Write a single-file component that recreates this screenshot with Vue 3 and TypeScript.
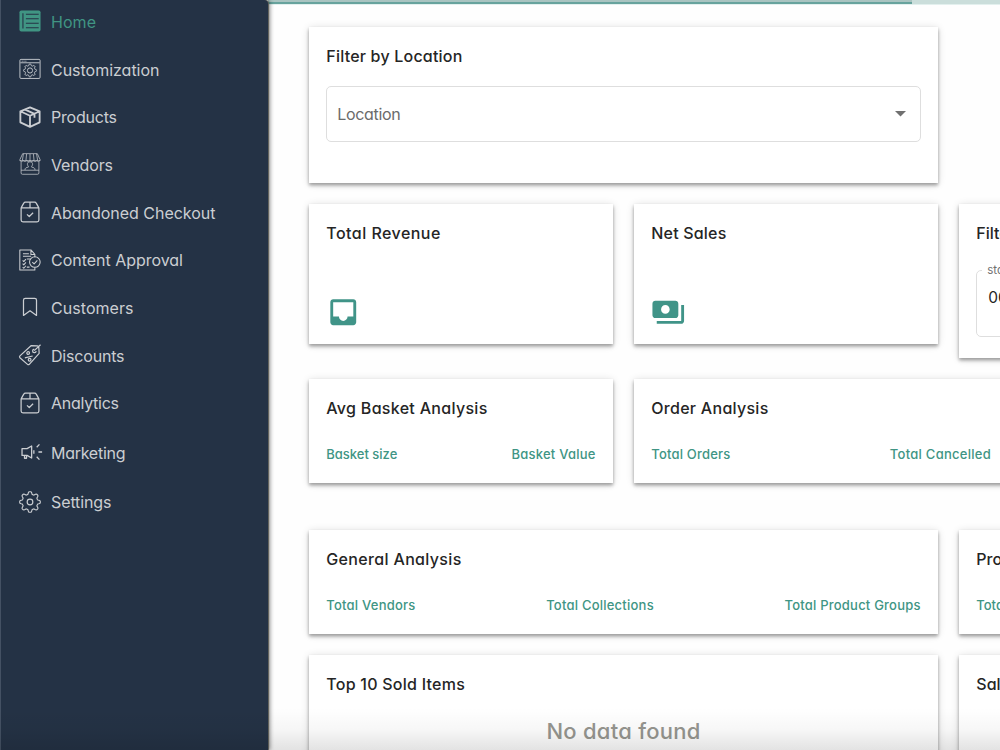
<script setup lang="ts">
interface MenuItem {
  label: string
  icon: string
  width: number
}

interface Metric {
  text: string
  width: number
}

const menu: MenuItem[] = [
  { label: 'Home', icon: 'home', width: 45 },
  { label: 'Customization', icon: 'custom', width: 108.5 },
  { label: 'Products', icon: 'box', width: 66 },
  { label: 'Vendors', icon: 'store', width: 62 },
  { label: 'Abandoned Checkout', icon: 'package', width: 164.5 },
  { label: 'Content Approval', icon: 'approval', width: 132 },
  { label: 'Customers', icon: 'bookmark', width: 82.5 },
  { label: 'Discounts', icon: 'tag', width: 73.5 },
  { label: 'Analytics', icon: 'package', width: 68 },
  { label: 'Marketing', icon: 'horn', width: 74.5 },
  { label: 'Settings', icon: 'gear', width: 60.5 },
]

const basket: Metric[] = [
  { text: 'Basket size', width: 71 },
  { text: 'Basket Value', width: 84 },
]
const orders: Metric[] = [
  { text: 'Total Orders', width: 79 },
  { text: 'Total Cancelled', width: 101 },
]
const general: Metric[] = [
  { text: 'Total Vendors', width: 89 },
  { text: 'Total Collections', width: 107.5 },
  { text: 'Total Product Groups', width: 136 },
]

// Tracks a label so that it spans the given width in pixels.
const vFit = {
  mounted(el: HTMLElement, binding: { value: number }) {
    const count = (el.textContent ?? '').length
    const spacing = (binding.value - el.getBoundingClientRect().width) / (count - 1)
    el.style.letterSpacing = `${spacing}px`
    el.style.marginRight = `${-spacing}px`
  },
}

// Outline of a cog with eight rounded teeth.
function cog(cx: number, cy: number, outer: number, inner: number): string {
  const steps = 96
  const points: string[] = []
  for (let i = 0; i < steps; i++) {
    const angle = (i / steps) * Math.PI * 2
    const wave = Math.max(-1, Math.min(1, Math.cos(angle * 8) * 1.7))
    const r = (outer + inner) / 2 + (wave * (outer - inner)) / 2
    points.push(`${(cx + r * Math.cos(angle)).toFixed(2)} ${(cy + r * Math.sin(angle)).toFixed(2)}`)
  }
  return `M${points.join('L')}Z`
}
</script>

<template>
  <div class="app">
    <nav class="sidebar">
      <a v-for="item in menu" :key="item.label" class="item" :class="[item.icon, { active: item.icon === 'home' }]">
        <svg class="icon" viewBox="0 0 24 24">
          <g v-if="item.icon === 'home'">
            <rect x=".5" y=".5" width="23" height="23" rx="2" fill="currentColor" stroke="none" />
            <path d="M7.500 4.600h14M7.500 9.500h14M7.500 14.500h14M7.500 19.400h14M4.300 3.600v16.600" stroke="#243245" stroke-width="1.2" />
          </g>
          <g v-else-if="item.icon === 'custom'" stroke-width="1">
            <rect x="1" y="1.500" width="22" height="20.800" rx="1.2" />
            <path d="M1.500 5.200h21M3 3.500h1M5 3.500h1M7 3.500h1" />
            <path :d="cog(12, 13.6, 7, 5.4)" />
            <circle cx="12" cy="13.600" r="2.800" />
          </g>
          <g v-else-if="item.icon === 'box'" stroke-width="2">
            <path d="M12 1.500 22.500 5.800v12L12 22.700 1.500 17.800v-12zM2 6l10 4.600L22 6M12 10.600v11.500M6.700 3.900l10.200 4.600v4.300" />
          </g>
          <g v-else-if="item.icon === 'store'" stroke-width=".8">
            <path d="M4 .7h16l3 6.500v1.300H1V7.200zM4.800 1 3.700 8M8.300 1 7.600 8M12 1v7M15.700 1l.7 7M19.200 1l1.100 7" />
            <path d="M1 8.200q1.800 1.900 3.600 0 1.900 1.900 3.700 0 1.900 1.900 3.700 0 1.900 1.900 3.700 0 1.900 1.900 3.700 0 1.800 1.900 3.600 0M2.300 9.500v12.200q0 1.500 1.400 1.500h16.600q1.400 0 1.400-1.500V9.500M2.300 18.800h19.400M6.500 18.500c0-2.400 1.500-2.500 3.700-3.100v-1c-1.600-1.300-1.600-4.800 1.800-4.800s3.400 3.500 1.800 4.800v1c2.200.6 3.700.7 3.700 3.100" />
          </g>
          <g v-else-if="item.icon === 'package'" stroke-width="1.350">
            <path d="M2.300 7.500v13.200q0 2 2 2h15.400q2 0 2-2V7.500zM2.300 7.500 5.200 2.300Q5.700 1.300 7 1.300h10q1.300 0 1.800 1l2.900 5.200M12 1.300v6M8.700 14.600l2.500 2.300 4.200-4.100" />
          </g>
          <g v-else-if="item.icon === 'approval'" stroke-width="1.150">
            <path d="M17.300 9V5.800L13 1H.9v22h16.400v-3.200M13 1v5h4.300M4.300 5.200h6.500M4.300 8h9M8.500 11h4M4 12.400l1.200 1.300L7.500 11M4 16l1.200 1.300L7.500 14.600M4 19.700 5.200 21l2.300-2.700M8.500 19.800h3" />
            <circle cx="17.300" cy="14.200" r="5.800" />
            <path d="m14.500 14.200 2 2 3.500-3.700" />
          </g>
          <g v-else-if="item.icon === 'bookmark'" stroke-width="1.350">
            <path d="M4.900 4.500q0-2 2-2h10.200q2 0 2 2v16.700l-7.100-5-7.100 5z" />
          </g>
          <g v-else-if="item.icon === 'tag'" stroke-width="1.300">
            <path d="M13.400 1.700 20 2.100q1.300.1 1.600 1.500l.4 6.600-10.800 12q-.9.800-1.900 0L1 15q-.9-1 0-2zM16.600 7.200 23.500.8M16.600 5.500a2 2 0 1 0 2.200 2.400M6.400 15.100l8.500-2" />
            <circle cx="10" cy="9.900" r="1.500" /><circle cx="11.600" cy="17.200" r="1.500" />
          </g>
          <g v-else-if="item.icon === 'horn'" stroke-width="1.400">
            <path d="M3.300 8.300h5.500l5-2.900v13.200l-5-2.900H3.300zM6 15.900v2.900h2.200v-2.900M16.200 10.200v3.600M19.300 6.800l3-3.100M21.200 12h4M19.300 17.200l3 3.100" />
          </g>
          <g v-else stroke-width="1.250">
            <path :d="cog(12, 12, 11.2, 8.5)" />
            <circle cx="12" cy="12" r="3.100" />
          </g>
        </svg>
        <span v-fit="item.width">{{ item.label }}</span>
      </a>
    </nav>

    <main class="content">
      <div class="progress"><div class="progress-fill"></div></div>
      <div class="grid">
        <section class="card location">
          <h2><span v-fit="136">Filter by Location</span></h2>
          <div class="select">
            <span v-fit="63.5">Location</span>
            <svg class="caret" viewBox="0 0 10 5"><path d="M0 0h10L5 5z" /></svg>
          </div>
        </section>

        <section class="card stat first">
          <h2><span v-fit="114">Total Revenue</span></h2>
          <svg class="stat-icon" viewBox="0 0 24 24"><path d="M19 3H4.990c-1.110 0-1.980.890-1.980 2L3 19c0 1.100.880 2 1.990 2H19c1.100 0 2-.9 2-2V5c0-1.110-.9-2-2-2zm0 12h-4c0 1.660-1.350 3-3 3s-3-1.340-3-3H4.990V5H19v10z" /></svg>
        </section>
        <section class="card stat">
          <h2><span v-fit="75">Net Sales</span></h2>
          <svg class="stat-icon" viewBox="0 0 24 24"><path d="M19 14V6c0-1.100-.9-2-2-2H3c-1.100 0-2 .9-2 2v8c0 1.100.9 2 2 2h14c1.100 0 2-.9 2-2zm-9-1c-1.660 0-3-1.340-3-3s1.340-3 3-3 3 1.340 3 3-1.340 3-3 3zm13-6v11c0 1.100-.9 2-2 2H4v-2h17V7h2z" /></svg>
        </section>
        <section class="card dates">
          <h2>Filter by date</h2>
          <fieldset>
            <legend>start date</legend>
            <span>06/</span>
          </fieldset>
        </section>

        <section class="card metrics first">
          <h2><span v-fit="161">Avg Basket Analysis</span></h2>
          <div class="labels"><span v-for="m in basket" :key="m.text" v-fit="m.width">{{ m.text }}</span></div>
        </section>
        <section class="card metrics wide">
          <h2><span v-fit="117">Order Analysis</span></h2>
          <div class="labels spaced"><span v-for="m in orders" :key="m.text" v-fit="m.width">{{ m.text }}</span></div>
        </section>

        <section class="card metrics wide first">
          <h2><span v-fit="135">General Analysis</span></h2>
          <div class="labels"><span v-for="m in general" :key="m.text" v-fit="m.width">{{ m.text }}</span></div>
        </section>
        <section class="card metrics">
          <h2>Products</h2>
          <div class="labels"><span>Total</span></div>
        </section>

        <section class="card table wide first">
          <h2><span v-fit="138.500">Top 10 Sold Items</span></h2>
          <p class="empty"><span v-fit="154">No data found</span></p>
        </section>
        <section class="card table">
          <h2>Sales</h2>
        </section>
      </div>
    </main>
    <div class="fade"></div>
  </div>
</template>

<style>
body {
  margin: 0;
  overflow: hidden;
}
</style>

<style scoped>
.app {
  position: relative;
  display: flex;
  width: 1000px;
  height: 750px;
  overflow: hidden;
  background: #fefefe;
  font-family: Inter, "Open Sans", sans-serif;
  font-feature-settings: "cv11";
}

.sidebar {
  position: relative;
  z-index: 1;
  box-sizing: border-box;
  flex: 0 0 268px;
  height: 750px;
  padding-left: 18px;
  border-left: 1px solid #445163;
  border-top-right-radius: 4px;
  background: #243245;
  box-shadow: 1px 0 1px #5c5c56, 2px 0 4px rgba(0, 0, 0, 0.45);
}

.item {
  display: flex;
  align-items: center;
  gap: 10px;
  height: 47.700px;
  color: #cbced2;
  font-size: 16px;
  line-height: 24px;
  white-space: nowrap;
}

.item span {
  display: inline-block;
  margin-top: -4px;
}

.item.active {
  color: #409583;
}

.item.horn,
.item.gear {
  height: 49.400px;
}

.item.horn {
  margin-top: 0.800px;
}

.icon {
  flex: none;
  width: 22px;
  height: 22px;
  margin-top: -5px;
  overflow: visible;
  fill: none;
  stroke: currentColor;
  stroke-linejoin: round;
}

.content {
  flex: 1;
  min-width: 0;
  overflow: hidden;
}

.progress {
  height: 4px;
  border-bottom: 1px solid #e3f0ee;
  background: #cbdedb;
}

.progress-fill {
  width: 644px;
  height: 4px;
  background: linear-gradient(#a9c4c1 0 50%, #67a39d 50%);
}

.grid {
  display: grid;
  grid-template-columns: repeat(4, 304px);
  grid-template-rows: 156px 154px 130px 104px 180px;
  gap: 21px;
  align-items: start;
  padding: 22px 0 0 41px;
}

.card {
  box-sizing: border-box;
  padding: 17px 17.500px 17px 17.300px;
  background: #fff;
  box-shadow: 0 2px 3px rgba(0, 0, 0, 0.24), 0 1px 8px rgba(0, 0, 0, 0.14), 0 3px 4px rgba(0, 0, 0, 0.12);
}

.first {
  grid-column-start: 1;
}

.wide,
.wide.first {
  grid-column-end: span 2;
}

h2 {
  margin: 0;
  color: #252525;
  font-size: 16px;
  font-weight: 500;
  line-height: 24px;
  white-space: nowrap;
}

h2 span,
.labels span,
.select span,
.empty span {
  display: inline-block;
}

.location {
  grid-column: 1 / span 2;
  height: 156px;
}

.select {
  box-sizing: border-box;
  display: flex;
  align-items: center;
  justify-content: space-between;
  height: 56px;
  margin-top: 18px;
  padding: 0 14px 0 10px;
  border: 1px solid #dedede;
  border-radius: 5px;
  color: #6b6b6b;
  font-size: 16px;
}

.caret {
  width: 11px;
  height: 5.500px;
  fill: #707070;
}

.stat {
  height: 140px;
}

.stat-icon {
  display: block;
  width: 34.500px;
  height: 34.500px;
  margin-top: 50px;
  fill: #409488;
}

.dates {
  height: 154px;
}

fieldset {
  box-sizing: border-box;
  height: 74px;
  min-width: 0;
  margin: 18px 0 0;
  padding: 11px;
  border: 1px solid #dedede;
  border-radius: 5px;
  font-size: 15.500px;
  line-height: 20px;
  color: #252525;
}

legend {
  margin-left: -6px;
  padding: 0 5px;
  color: #707070;
  font-size: 11.500px;
  line-height: 14px;
}

.metrics {
  height: 104px;
}

.labels {
  display: flex;
  justify-content: space-between;
  margin-top: 24px;
  color: #409584;
  font-size: 13px;
  font-weight: 500;
  line-height: 20px;
  white-space: nowrap;
}

.labels.spaced {
  justify-content: flex-start;
  gap: 159.500px;
}

.table {
  height: 180px;
}

.empty {
  margin: 19px 0 0;
  color: #969690;
  font-size: 22px;
  font-weight: 500;
  line-height: 32px;
  text-align: center;
}

.fade {
  position: absolute;
  right: 0;
  bottom: 0;
  left: 0;
  z-index: 2;
  height: 42px;
  background: linear-gradient(rgba(0, 0, 0, 0), rgba(0, 0, 0, 0.030) 50%, rgba(0, 0, 0, 0.110));
  pointer-events: none;
}
</style>
